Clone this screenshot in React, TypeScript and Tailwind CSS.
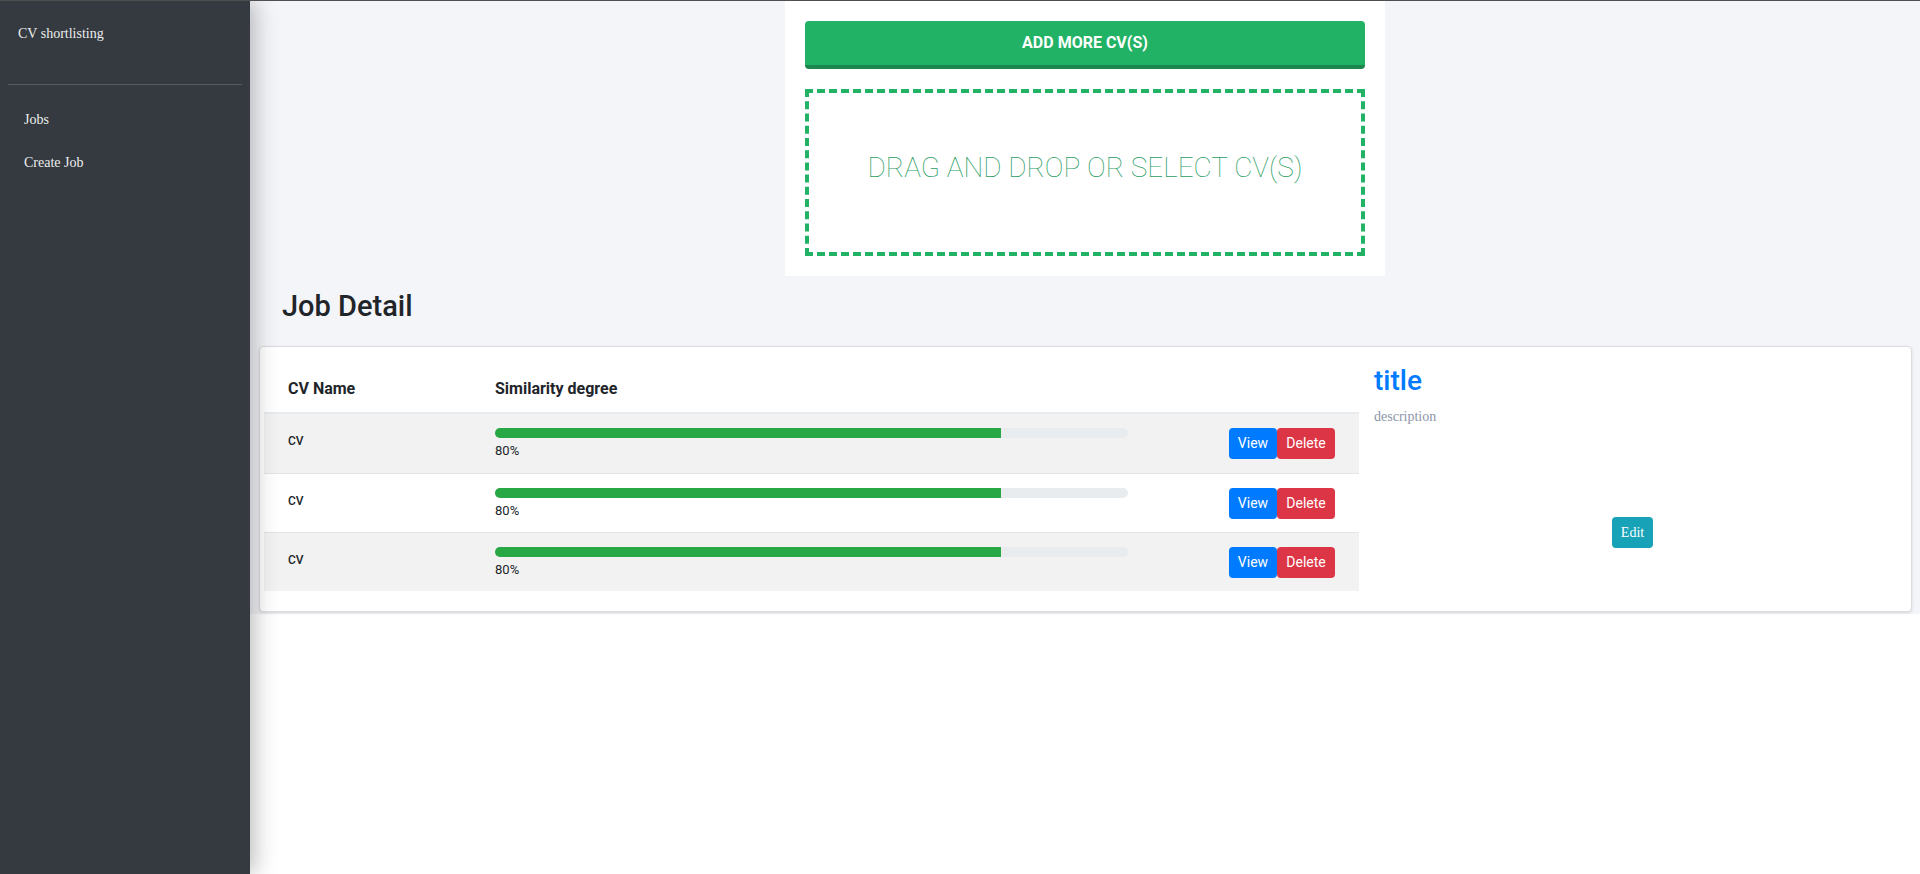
import React from 'react';

const rows = [
  { name: 'CV', score: 80 },
  { name: 'CV', score: 80 },
  { name: 'CV', score: 80 },
];

function Sidebar() {
  return (
    <aside className="relative z-10 w-[250px] shrink-0 bg-[#343a40] font-['Liberation_Serif',serif] text-[14px] leading-[20px] text-[#eeeeee] shadow-[4px_0_22px_rgba(0,0,0,0.28)]">
      <div className="px-[18px] pt-[23px]">CV shortlisting</div>
      <div className="mx-2 mt-[40px] h-px bg-[#555b62]" />
      <nav className="mt-[25px] flex flex-col gap-[23px] px-[24px]">
        <a href="#">Jobs</a>
        <a href="#">Create Job</a>
      </nav>
    </aside>
  );
}

function Uploader() {
  return (
    <div className="mx-auto w-[600px] bg-white p-5">
      <button className="h-[48px] w-full rounded border-b-4 border-[#1b874f] bg-[#21b265] text-[16px] font-bold text-white uppercase">
        Add more CV(s)
      </button>
      <div className="mt-5 flex h-[167px] items-center justify-center border-4 border-dashed border-[#21b265] pb-[10px]">
        <span className="text-[28px] font-thin text-[#2a9d62] uppercase">Drag and drop or select CV(s)</span>
      </div>
    </div>
  );
}

function CvRow({ name, score, striped, first }: { name: string; score: number; striped: boolean; first: boolean }) {
  return (
    <div className={`flex h-[59px] items-start ${first ? '' : 'border-t border-[#e4e4e4]'} ${striped ? 'bg-[#f2f2f2]' : 'bg-white'}`}>
      <div className="w-[231px] pl-[24px] pt-[17px] text-[12px] leading-[20px] font-medium text-[#212529]">{name}</div>
      <div className="w-[633px] pt-[14px]">
        <div className="h-[10px] overflow-hidden rounded-full bg-[#e9ecef]">
          <div className="h-full bg-[#28a745]" style={{ width: `${score}%` }} />
        </div>
        <div className="mt-[4px] text-[13px] leading-[18px] text-[#212529]">{score}%</div>
      </div>
      <div className="flex flex-1 justify-end pr-[24px] pt-[14px]">
        <button className="h-[31px] w-[48px] rounded bg-[#007bff] text-[14px] text-white">View</button>
        <button className="h-[31px] w-[58px] rounded bg-[#dc3545] text-[14px] text-white">Delete</button>
      </div>
    </div>
  );
}

export default function App() {
  return (
    <div className="flex h-screen overflow-hidden border-t border-[#4f4f4f] bg-white font-['Roboto',sans-serif]">
      <Sidebar />
      <main className="flex-1">
        <div className="bg-[#f4f5f9] pb-[2px]">
          <Uploader />

          <h2 className="mt-[13px] pl-[32px] text-[29px] leading-[1.2] font-medium text-[#212529]">Job Detail</h2>

          {/* table + job info */}
          <div className="mt-[22px] ml-[9px] mr-[8px] flex rounded border border-[#dcdcdc] bg-white pb-[20px] shadow-[0_1px_3px_rgba(0,0,0,0.12)]">
            <div className="ml-[4px] w-[1095px]">
              <div className="flex h-[67px] border-b-2 border-[#e9ecef] pt-[30px] text-[16px] leading-[24px] font-bold text-[#212529]">
                <div className="w-[231px] pl-[24px]">CV Name</div>
                <div>Similarity degree</div>
              </div>
              {rows.map((r, i) => (
                <CvRow key={i} name={r.name} score={r.score} striped={i % 2 === 0} first={i === 0} />
              ))}
            </div>

            <div className="flex-1 pl-[15px] pt-[17px]">
              <h3 className="text-[28px] leading-[1.2] font-medium text-[#007bff]">title</h3>
              <p className="mt-[10px] font-['Liberation_Serif',serif] text-[14px] leading-[20px] text-[#8c96a8]">description</p>
              <button className="mt-[90px] ml-[238px] h-[31px] w-[41px] rounded bg-[#17a2b8] font-['Liberation_Serif',serif] text-[14px] text-white">
                Edit
              </button>
            </div>
          </div>
        </div>
      </main>
    </div>
  );
}
